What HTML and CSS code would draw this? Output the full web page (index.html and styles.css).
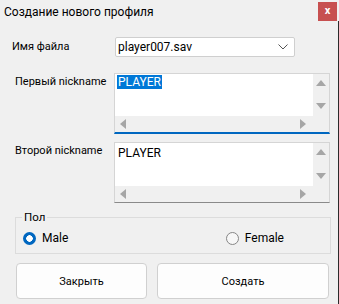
FILE: index.html
```html
<!DOCTYPE html>
<html lang="ru">
<head>
<meta charset="utf-8">
<title>Создание нового профиля</title>
<link rel="stylesheet" href="styles.css">
</head>
<body>
<div class="window">
  <div class="titlebar">
    <span class="title">Создание нового профиля</span>
    <span class="close">x</span>
  </div>
  <div class="content">
    <div class="row row-file">
      <label class="label">Имя файла</label>
      <div class="combo">
        <span class="combo-text">player007.sav</span>
        <svg class="chev" width="10" height="6" viewBox="0 0 10 6"><path d="M0.5 0.5 L5 5 L9.5 0.5" fill="none" stroke="#555" stroke-width="1"/></svg>
      </div>
    </div>
    <div class="row row-memo">
      <label class="label label-memo">Первый nickname</label>
      <div class="memo focused">
        <div class="memo-area"><span class="sel">PLAYER</span></div>
        <div class="vscroll">
          <svg width="10" height="6" viewBox="0 0 10 6"><path d="M5 0 L10 6 L0 6 Z" fill="#a6a6a6"/></svg>
          <svg width="10" height="6" viewBox="0 0 10 6"><path d="M0 0 L10 0 L5 6 Z" fill="#a6a6a6"/></svg>
        </div>
        <div class="hscroll">
          <svg width="6" height="10" viewBox="0 0 6 10"><path d="M6 0 L6 10 L0 5 Z" fill="#a6a6a6"/></svg>
          <svg width="6" height="10" viewBox="0 0 6 10"><path d="M0 0 L6 5 L0 10 Z" fill="#a6a6a6"/></svg>
        </div>
        <div class="corner"></div>
      </div>
    </div>
    <div class="row row-memo2">
      <label class="label label-memo">Второй nickname</label>
      <div class="memo">
        <div class="memo-area"><span class="txt">PLAYER</span></div>
        <div class="vscroll">
          <svg width="10" height="6" viewBox="0 0 10 6"><path d="M5 0 L10 6 L0 6 Z" fill="#a6a6a6"/></svg>
          <svg width="10" height="6" viewBox="0 0 10 6"><path d="M0 0 L10 0 L5 6 Z" fill="#a6a6a6"/></svg>
        </div>
        <div class="hscroll">
          <svg width="6" height="10" viewBox="0 0 6 10"><path d="M6 0 L6 10 L0 5 Z" fill="#a6a6a6"/></svg>
          <svg width="6" height="10" viewBox="0 0 6 10"><path d="M0 0 L6 5 L0 10 Z" fill="#a6a6a6"/></svg>
        </div>
        <div class="corner"></div>
      </div>
    </div>
    <fieldset class="group">
      <legend class="legend">Пол</legend>
      <div class="radios">
        <span class="radio"><span class="dot checked"></span>Male</span>
        <span class="radio"><span class="dot"></span>Female</span>
      </div>
    </fieldset>
    <div class="buttons">
      <button class="btn btn-close">Закрыть</button>
      <button class="btn btn-create">Создать</button>
    </div>
  </div>
</div>
</body>
</html>
```

FILE: styles.css
```css
* { box-sizing: border-box; }
html, body { margin: 0; padding: 0; }
body {
  width: 339px;
  height: 304px;
  background: #f0f0f0;
  font-family: Roboto, "Noto Sans", sans-serif;
  font-size: 12px;
  color: #000;
  overflow: hidden;
}
.window {
  width: 339px;
  height: 304px;
  display: flex;
  flex-direction: column;
  border-right: 1px solid #2b2b2b;
}
.titlebar {
  height: 21px;
  display: flex;
  align-items: center;
  justify-content: space-between;
  padding-left: 4px;
  margin-right: -1px;
  background: #f0f0f0;
}
.title {
  font-size: 12px;
  color: #000;
  margin-top: 3px;
  white-space: nowrap;
}
.close {
  width: 19px;
  height: 19px;
  margin-top: 1px;
  margin-right: 2px;
  background: #c75050;
  color: #fff;
  font-weight: bold;
  font-size: 11px;
  display: flex;
  align-items: center;
  justify-content: center;
  line-height: 1;
  padding-bottom: 2px;
}
.content {
  padding: 16px 8px 0 0;
  display: flex;
  flex-direction: column;
}
.row {
  display: flex;
  align-items: flex-start;
}
.label {
  width: 114px;
  flex: none;
  padding-left: 12px;
  line-height: 16px;
  font-size: 11px;
  white-space: nowrap;
}
.label-memo { padding-left: 15px; }
.row-file .label { margin-top: 2px; }
.combo {
  width: 180px;
  height: 20px;
  margin-left: 1px;
  background: #fff;
  border: 1px solid #cfcfcf;
  border-radius: 2px;
  display: flex;
  align-items: center;
  justify-content: space-between;
  padding: 0 6px 0 2px;
}
.combo-text { line-height: 16px; }
.row-memo { margin-top: 16px; }
.row-memo .label { margin-top: 1px; }
.row-memo2 { margin-top: 8px; }
.row-memo2 .label { margin-top: 1px; }
.memo {
  width: 216px;
  height: 61px;
  border: 1px solid #d5d5d5;
  border-bottom: 1px solid #8a8a8a;
  background: #f0f0f0;
  display: grid;
  grid-template-columns: 1fr 16px;
  grid-template-rows: 1fr 16px;
}
.memo.focused {
  border-bottom: 2px solid #0067c0;
}
.memo-area {
  background: #fff;
  padding: 1px 2px;
  line-height: 14px;
}
.sel {
  background: #0078d7;
  color: #fff;
  display: inline-block;
  padding: 0 1px;
  line-height: 14px;
}
.txt { display: inline-block; padding: 2px 1px 0; }
.vscroll {
  display: flex;
  flex-direction: column;
  align-items: center;
  justify-content: space-between;
  padding: 6px 0 7px;
}
.hscroll {
  display: flex;
  align-items: center;
  justify-content: space-between;
  padding: 0 7px 0 5px;
}
.corner { background: #f0f0f0; }
.group {
  margin: 8px 0 0 15px;
  width: 316px;
  height: 43px;
  border: 1px solid #dcdcdc;
  padding: 0;
  min-width: 0;
}
.legend {
  padding: 0 2px;
  margin-left: 6px;
  line-height: 12px;
  font-size: 11.5px;
}
.radios {
  display: flex;
  justify-content: space-between;
  padding: 7px 0 0 7px;
  width: 268px;
}
.radio {
  display: flex;
  align-items: center;
  gap: 6px;
  line-height: 16px;
}
.dot {
  width: 13px;
  height: 13px;
  border-radius: 50%;
  border: 1px solid #868686;
  background: #f7f7f7;
  display: inline-block;
}
.dot.checked {
  border: none;
  background: radial-gradient(circle, #fff 0 3px, #0067c0 3.5px);
}
.buttons {
  display: flex;
  gap: 10px;
  margin: 9px 0 0 16px;
}
.btn {
  height: 36px;
  background: #fdfdfd;
  border: 1px solid #d0d0d0;
  border-radius: 4px;
  font-family: Roboto, "Noto Sans", sans-serif;
  font-size: 11px;
  color: #000;
  padding: 0;
}
.btn-close { width: 131px; }
.btn-create { width: 172px; }
```
